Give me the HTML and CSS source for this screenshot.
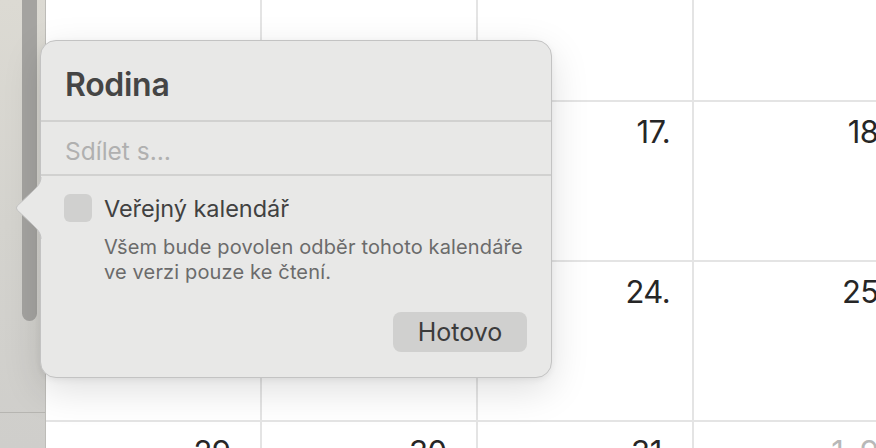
FILE: index.html
```html
<!DOCTYPE html>
<html lang="cs">
<head>
<meta charset="utf-8">
<title>Kalendář – Rodina</title>
<link rel="stylesheet" href="styles.css">
</head>
<body>
<div class="app">
  <aside class="sidebar">
    <div class="thumb"></div>
    <div class="side-line"></div>
  </aside>
  <main class="month">
    <div class="cell"></div>
    <div class="cell"></div>
    <div class="cell"></div>
    <div class="cell"></div>
    <div class="cell"></div>
    <div class="cell"></div>
    <div class="cell"><span class="day">17.</span></div>
    <div class="cell"><span class="day">18.</span></div>
    <div class="cell"></div>
    <div class="cell"></div>
    <div class="cell"><span class="day">24.</span></div>
    <div class="cell"><span class="day">25.</span></div>
    <div class="cell"><span class="day">29.</span></div>
    <div class="cell"><span class="day">30.</span></div>
    <div class="cell"><span class="day">31.</span></div>
    <div class="cell"><span class="day day-other">1. 9.</span></div>
  </main>
  <div class="popover">
    <svg class="pop-arrow" width="27" height="62" viewBox="0 0 27 62" aria-hidden="true">
      <path class="arrow-fill" d="M27,0 L26,0 C26,6 22.5,9.5 18.5,13.5 L2.2,29 Q0.6,31 2.2,33 L18.5,48.5 C22.5,52.5 26,56 26,62 L27,62 Z"/>
      <path class="arrow-edge" d="M26,0 C26,6 22.5,9.5 18.5,13.5 L2.2,29 Q0.6,31 2.2,33 L18.5,48.5 C22.5,52.5 26,56 26,62"/>
    </svg>
    <div class="pop-title">Rodina</div>
    <div class="pop-share">Sdílet s…</div>
    <div class="pop-body">
      <label class="check-row">
        <span class="checkbox"></span>
        <span class="check-label">Veřejný kalendář</span>
      </label>
      <p class="pop-desc">Všem bude povolen odběr tohoto kalendáře<br>ve verzi pouze ke čtení.</p>
      <div class="pop-actions">
        <button class="btn" type="button">Hotovo</button>
      </div>
    </div>
  </div>
</div>
</body>
</html>
```

FILE: styles.css
```css
html, body {
  margin: 0;
  padding: 0;
  width: 876px;
  height: 448px;
  overflow: hidden;
  background: #ffffff;
  font-family: "Inter", "Noto Sans", "Liberation Sans", sans-serif;
}

.app {
  position: relative;
  display: flex;
  width: 876px;
  height: 448px;
  overflow: hidden;
}

.sidebar {
  flex: 0 0 45px;
  width: 45px;
  height: 448px;
  border-right: 1px solid #bdbcb8;
  background: linear-gradient(to bottom, #dcdad3 0%, #d4d3ce 50%, #cfcecb 100%);
  display: flex;
  flex-direction: column;
}

.thumb {
  margin-left: 22px;
  width: 15px;
  height: 321px;
  border-radius: 0 0 8px 8px;
  background: #a4a3a0;
}

.side-line {
  margin-top: 91px;
  height: 1px;
  background: #b6b5b1;
}

.month {
  flex: 0 0 auto;
  display: grid;
  grid-template-columns: 214px 214px 214px 214px;
  grid-template-rows: 100px 158px 158px 158px;
  gap: 2px;
  background: #e4e4e4;
  width: 862px;
}

.cell {
  background: #ffffff;
  display: flex;
  justify-content: flex-end;
  align-items: flex-start;
  padding: 12px 22px 0 0;
}

.day {
  font-size: 31px;
  line-height: 36px;
  font-weight: 400;
  color: #262626;
  letter-spacing: -0.6px;
  white-space: nowrap;
}

.day-other {
  color: #b8b8b8;
}

.popover {
  position: absolute;
  left: 40px;
  top: 40px;
  width: 512px;
  height: 338px;
  box-sizing: border-box;
  background: #e8e8e7;
  border: 1px solid #c3c3c3;
  border-radius: 16px;
  box-shadow: 0 12px 38px rgba(0, 0, 0, 0.13), 0 2px 6px rgba(0, 0, 0, 0.06);
  display: flex;
  flex-direction: column;
}

.pop-arrow {
  position: absolute;
  left: -26px;
  top: 136px;
  overflow: visible;
}

.arrow-fill {
  fill: #e8e8e7;
}

.arrow-edge {
  fill: none;
  stroke: #c3c3c3;
  stroke-width: 1;
}

.pop-title {
  height: 81px;
  box-sizing: border-box;
  padding: 25px 0 0 24px;
  font-size: 32px;
  line-height: 38px;
  font-weight: 600;
  color: #454545;
  letter-spacing: -0.3px;
  border-bottom: 2px solid #d1d1d0;
}

.pop-share {
  height: 54px;
  box-sizing: border-box;
  padding: 14px 0 0 24px;
  font-size: 24.5px;
  line-height: 30px;
  color: #b0b0b0;
  border-bottom: 2px solid #d1d1d0;
}

.pop-body {
  flex: 1;
  display: flex;
  flex-direction: column;
  padding: 17px 24px 0 23px;
}

.check-row {
  display: flex;
  align-items: center;
  gap: 12px;
}

.checkbox {
  width: 28px;
  height: 28px;
  border-radius: 6px;
  background: #d0d0cf;
}

.check-label {
  font-size: 23.5px;
  line-height: 28px;
  padding-top: 2px;
  color: #414141;
  letter-spacing: -0.05px;
}

.pop-desc {
  margin: 12px -10px 0 40px;
  font-size: 20px;
  line-height: 25px;
  letter-spacing: 0.15px;
  white-space: nowrap;
  color: #6b6b6b;
}

.pop-actions {
  display: flex;
  justify-content: flex-end;
  margin-top: 27px;
}

.btn {
  width: 134px;
  height: 40px;
  border: none;
  border-radius: 8px;
  background: #d0d0cf;
  font-family: inherit;
  font-size: 25px;
  line-height: 30px;
  color: #3c3c3c;
  padding: 0;
}
```
